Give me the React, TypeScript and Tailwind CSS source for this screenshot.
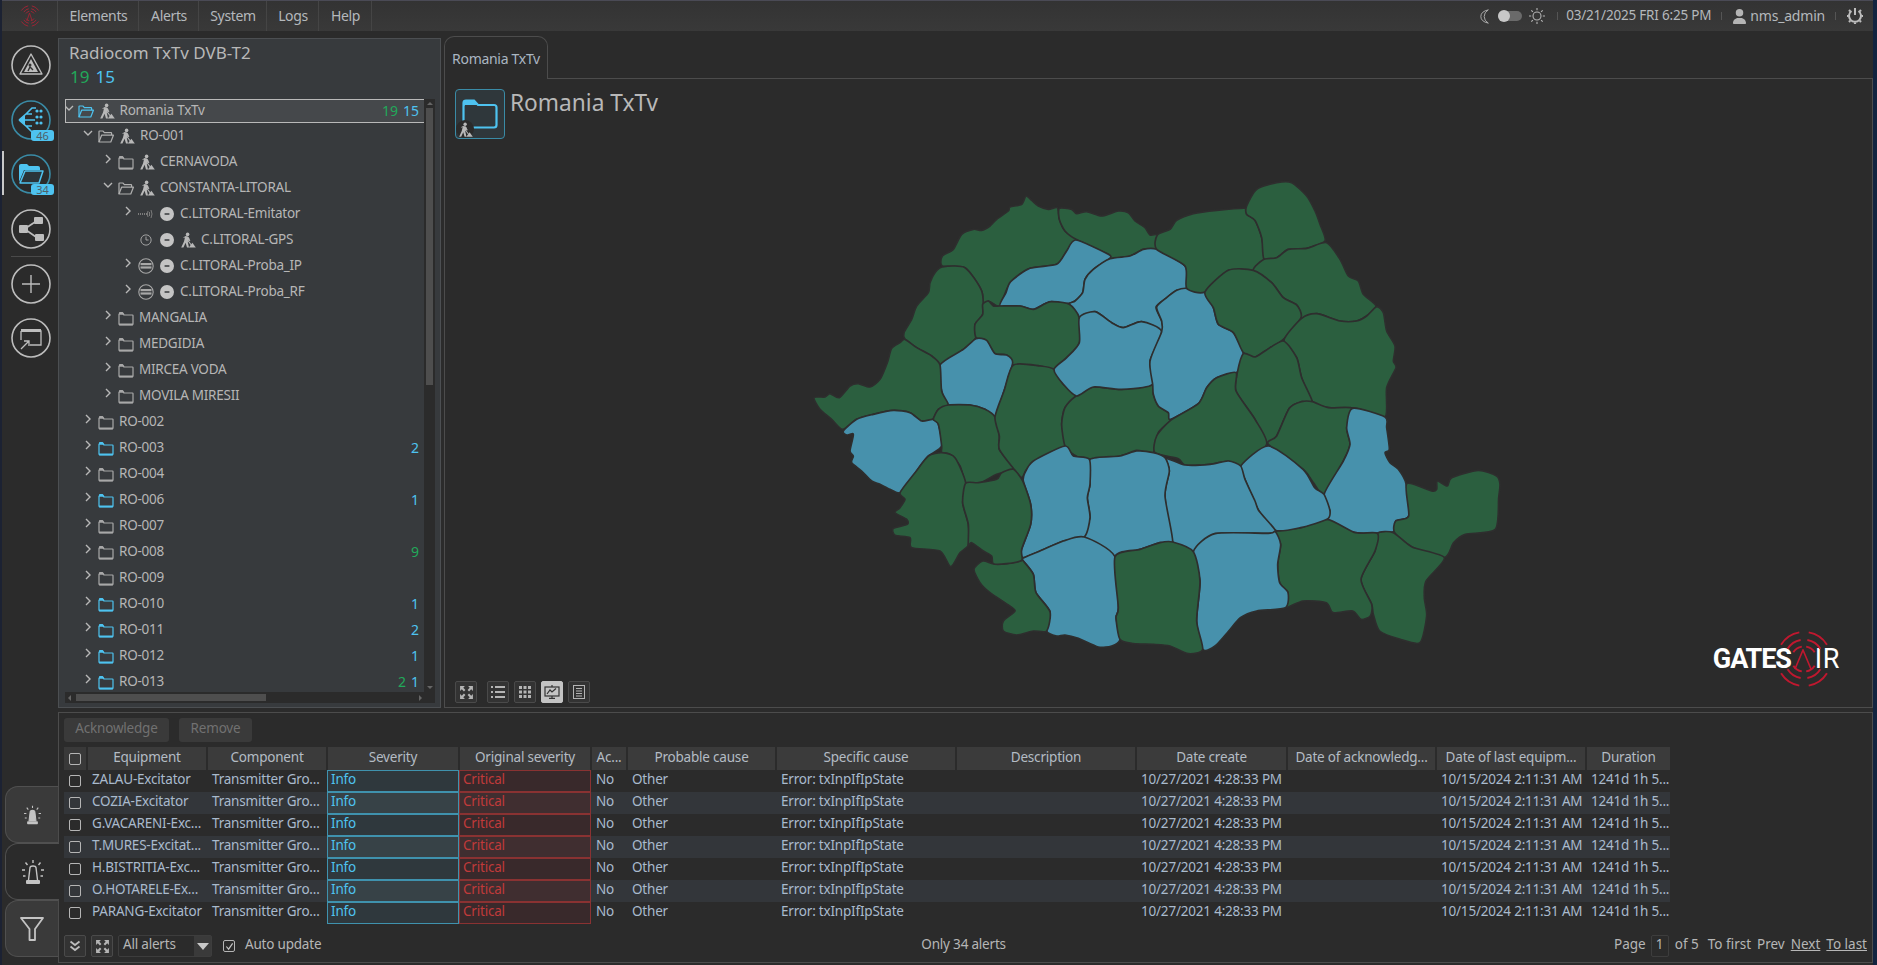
import React from "react";
import { FaCircleMinus, FaUser } from "react-icons/fa6";

const COUNTIES: [string, boolean][] = [
  ["427,315 427,285 460,265 485,220 520,205 545,208 570,195 590,175 625,150 630,138 665,130 678,105 695,118 715,135 745,145 772,140 778,175 795,210 828,235 800,270 770,310 690,322 640,355 620,385 600,435 580,428 565,420 548,430 545,390 495,320", false],
  ["778,142 815,145 830,158 860,152 905,165 955,150 985,155 1005,180 1035,200 1050,222 1075,222 1070,265 1030,265 990,285 930,293 925,280 828,235 795,210 778,175", false],
  ["828,237 925,280 928,293 880,325 855,355 848,395 825,420 800,428 755,422 735,428 700,445 660,435 600,435 618,395 632,362 690,322 770,310 800,270", true],
  ["930,293 990,285 1030,265 1070,265 1155,315 1160,380 1130,388 1100,410 1068,438 1085,480 1085,510 1025,482 970,500 935,485 885,452 838,470 808,430 825,420 848,395 855,355 880,325", true],
  ["427,318 495,320 545,390 548,460 525,490 528,530 490,565 420,612 395,585 350,560 315,535 312,515 335,475 350,435 385,395 390,365 405,335", false],
  ["548,430 565,420 580,435 600,435 660,435 700,445 735,428 755,422 808,430 838,470 838,545 800,590 762,625 720,615 640,612 620,582 585,578 560,540 528,530 525,490 548,460", false],
  ["528,533 560,538 585,578 620,582 638,605 612,690 585,765 555,745 510,732 445,732 425,690 420,612 490,565", true],
  ["42,710 75,708 90,698 118,710 150,675 175,668 210,678 240,655 262,605 275,562 300,545 315,535 350,560 395,585 420,612 425,690 445,732 415,745 398,775 365,780 330,755 280,748 220,760 170,775 128,805 95,775 60,745", false],
  ["130,810 170,775 220,760 280,748 330,755 365,780 398,775 415,790 425,855 385,885 350,930 305,995 270,985 240,970 215,960 185,930 155,905 160,885 150,870 160,820 140,822", true],
  ["400,775 415,745 445,732 510,732 555,745 585,768 598,825 598,865 640,922 590,940 535,968 497,965 480,915 450,880 425,876 425,855 415,790", false],
  ["640,612 720,615 762,625 790,670 828,705 795,740 785,790 795,855 720,895 680,925 665,950 640,922 598,865 598,825 585,768 612,690", false],
  ["828,705 880,678 965,685 1055,670 1060,700 1075,735 1105,755 1112,778 1075,815 1060,875 1010,868 960,885 860,895 820,880 795,855 785,790 795,740", false],
  ["838,470 885,452 935,485 970,500 1025,482 1085,512 1050,600 1058,670 965,685 880,678 830,705 790,670 762,625 800,590 838,545", true],
  ["1070,438 1100,410 1130,388 1160,382 1215,395 1240,440 1255,490 1300,515 1330,575 1310,635 1250,650 1220,680 1195,728 1112,775 1105,755 1075,735 1060,700 1058,670 1050,600 1085,512 1085,480", true],
  ["1072,222 1110,205 1130,178 1180,158 1250,148 1338,142 1340,160 1365,178 1385,230 1392,295 1360,328 1285,328 1215,393 1160,382 1155,315 1070,265", false],
  ["1340,135 1370,85 1430,65 1475,65 1520,105 1545,150 1560,190 1575,240 1520,262 1465,265 1430,290 1392,295 1385,230 1365,178 1340,160", false],
  ["1580,245 1620,295 1645,345 1675,360 1690,400 1728,435 1700,465 1670,480 1620,480 1550,458 1505,472 1500,450 1490,432 1450,410 1415,365 1360,328 1392,295 1430,290 1465,265 1520,262", false],
  ["1215,393 1285,328 1360,328 1415,365 1450,410 1490,432 1503,470 1450,535 1395,570 1365,588 1330,575 1300,515 1255,490 1240,440", false],
  ["1730,437 1750,455 1760,510 1785,555 1780,600 1788,620 1760,680 1755,768 1670,742 1585,740 1537,722 1505,650 1490,590 1452,538 1505,472 1550,458 1620,480 1670,480 1700,465", false],
  ["1450,540 1490,590 1505,650 1537,722 1505,722 1468,742 1430,825 1400,848 1365,775 1308,690 1312,635 1330,578 1365,588 1395,570", false],
  ["1308,635 1308,690 1365,775 1400,850 1325,915 1285,900 1230,910 1155,912 1135,893 1065,875 1070,825 1112,778 1195,728 1220,680 1250,650", false],
  ["1537,722 1585,740 1658,742 1640,800 1650,850 1630,900 1573,998 1540,965 1510,925 1405,850 1430,825 1468,742 1505,722", false],
  ["1658,742 1755,768 1760,800 1768,865 1755,875 1770,905 1795,925 1818,968 1826,1065 1787,1080 1784,1112 1666,1115 1581,1075 1590,1050 1573,998 1630,900 1650,850 1640,800", true],
  ["1820,968 1895,990 1910,985 1912,960 1942,975 1955,950 2035,928 2090,945 2100,970 2096,1010 2086,1105 1996,1120 1961,1145 1933,1190 1836,1158 1784,1115 1787,1080 1826,1065", false],
  ["1780,1115 1836,1158 1933,1190 1878,1260 1873,1310 1880,1365 1860,1445 1801,1435 1739,1410 1720,1360 1715,1330 1683,1255 1725,1170 1732,1117", false],
  ["1426,1112 1502,1100 1581,1075 1666,1115 1732,1117 1725,1170 1683,1255 1715,1330 1711,1365 1683,1375 1658,1350 1599,1355 1579,1325 1509,1320 1456,1340 1464,1295 1439,1265 1433,1210 1442,1150", false],
  ["1405,855 1509,925 1544,980 1572,1000 1590,1050 1581,1075 1502,1100 1426,1108 1377,1050 1335,955 1322,915", true],
  ["1100,893 1155,912 1230,910 1285,900 1322,915 1335,955 1365,1020 1377,1050 1426,1108 1405,1117 1245,1118 1180,1172 1118,1143 1095,1005 1108,930", true],
  ["1245,1118 1405,1117 1426,1112 1442,1150 1433,1210 1439,1265 1464,1295 1456,1340 1370,1350 1321,1370 1286,1410 1245,1455 1208,1465 1190,1380 1200,1260 1180,1172", true],
  ["870,895 960,885 1010,870 1060,875 1095,890 1108,930 1095,1005 1118,1143 1080,1145 1020,1165 945,1187 853,1128 870,1070 862,1010 870,970", true],
  ["795,855 820,885 868,895 870,970 862,1010 870,1070 853,1128 790,1140 720,1170 668,1190 665,1165 692,1090 692,1030 670,960 675,935 700,900", true],
  ["668,1192 720,1170 790,1140 853,1128 945,1187 955,1340 948,1370 960,1435 935,1455 895,1458 835,1432 795,1422 770,1425 740,1410 750,1352 708,1295 700,1240 670,1200", true],
  ["945,1187 1020,1165 1080,1145 1118,1143 1180,1172 1200,1260 1190,1380 1208,1465 1165,1478 1110,1455 1060,1450 1000,1448 960,1435 948,1370 955,1340", false],
  ["522,1225 548,1200 580,1208 620,1208 665,1198 670,1200 700,1240 708,1295 750,1352 740,1410 700,1410 650,1422 610,1410 610,1380 645,1350 625,1332 570,1295 540,1265", false],
  ["300,995 345,935 385,885 425,875 465,890 497,965 488,1025 505,1090 505,1152 480,1175 452,1217 420,1170 335,1160 330,1130 285,1123 280,1102 322,1090 320,1075 285,1055 300,1040 315,1015", false],
  ["497,967 535,965 590,955 605,935 640,925 668,960 692,1030 692,1090 665,1165 665,1198 620,1208 580,1208 575,1185 550,1170 515,1145 505,1152 505,1090 488,1025", false],
];

function smooth(points: string): string {
  const p = points.split(" ").map((s) => s.split(",").map(Number));
  const n = p.length;
  const k = 0.12;
  let d = `M${p[0][0]},${p[0][1]}`;
  for (let i = 0; i < n; i++) {
    const a = p[(i - 1 + n) % n];
    const b = p[i];
    const c = p[(i + 1) % n];
    const e = p[(i + 2) % n];
    d += ` C${b[0] + (c[0] - a[0]) * k},${b[1] + (c[1] - a[1]) * k} ${c[0] - (e[0] - b[0]) * k},${c[1] - (e[1] - b[1]) * k} ${c[0]},${c[1]}`;
  }
  return d + "Z";
}

function RomaniaMap() {
  return (
    <svg viewBox="0 0 2115 1500" className="w-[705px] h-[500px] block">
      {COUNTIES.map(([pts, blue], i) => (
        <path key={i} d={smooth(pts)} fill={blue ? "#4791ac" : "#2b5f3f"} stroke="#2e2e2e" strokeWidth={5} strokeLinejoin="round" />
      ))}
    </svg>
  );
}

function Folder({ open, color, className }: { open?: boolean; color: string; className?: string }) {
  return (
    <svg viewBox="0 0 16 15" className={className ?? "w-4 h-[15px] shrink-0"} fill="none" stroke={color} strokeWidth={1.2}>
      {open ? (
        <>
          <path d="M1 13 V2.6 Q1 2 1.6 2 H5 L6.4 3.6 H13 Q13.6 3.6 13.6 4.2 V6" />
          <path d="M1 13 L3.6 6.2 H15.4 L12.8 13 Z" strokeLinejoin="round" />
        </>
      ) : (
        <>
          <path d="M1 3 H5 L6 4 H14.4 Q15 4 15 4.6 V13 Q15 13.8 14.2 13.8 H1.8 Q1 13.8 1 13 Z" strokeLinejoin="round" />
          <path d="M1 3.6 V1.8 Q1 1 1.8 1 H4.8 L6.6 3.4 H1 Z" fill={color} stroke="none" />
          <path d="M1 13.4 H15" strokeWidth={1.8} />
        </>
      )}
    </svg>
  );
}

function Chevron({ open }: { open?: boolean }) {
  return (
    <svg viewBox="0 0 10 10" className="w-[10px] h-[10px] shrink-0 -mt-[6px] -ml-[2px]" fill="none" stroke="#b8b8b8" strokeWidth={1.4}>
      {open ? <path d="M1 3 L5 7 L9 3" /> : <path d="M3 1 L7 5 L3 9" />}
    </svg>
  );
}

function Worker({ className = "w-4 h-4" }: { className?: string }) {
  return (
    <svg viewBox="0 0 16 16" className={className + " shrink-0"} fill="#b8b8b8">
      <circle cx="7.6" cy="2.4" r="1.8" />
      <path d="M5.2 4.6 L8 4.4 L9.4 6.4 L7.8 10 L9 15.6 L7 15.6 L5.6 10.8 L3.4 15.6 L1.2 15.6 L4 9.6 Z" />
      <path d="M8.4 5.2 L10.4 8.4 L9.4 9.2 L7.4 6.2 Z" />
      <path d="M6.4 5.6 L11.8 13 L11 13.6 L5.6 6.2 Z" />
      <path d="M8.8 15.6 L12.4 10.8 L15.8 15.6 Z" />
      <path d="M3.4 5.2 L7 3.6 L7.2 4.2 L3.8 6 Z" />
    </svg>
  );
}

function ProbaIcon() {
  return (
    <svg viewBox="0 0 16 16" className="w-4 h-4 shrink-0" fill="none" stroke="#a8a8a8">
      <circle cx="8" cy="8" r="7.2" strokeWidth={1.1} />
      <rect x="2.5" y="5" width="11" height="2.2" fill="#a8a8a8" stroke="none" />
      <rect x="2.5" y="8.4" width="11" height="2.2" fill="#a8a8a8" stroke="none" />
    </svg>
  );
}

function EmitterIcon() {
  return (
    <svg viewBox="0 0 16 10" className="w-4 h-[10px] shrink-0" fill="none" stroke="#7c7c7c" strokeWidth={1}>
      <path d="M0 5 H9" strokeDasharray="1 1" strokeWidth={2} />
      <path d="M10 2 Q8.6 5 10 8 M13 1 Q15 5 13 9 M11.5 3 V7" />
    </svg>
  );
}

function ClockIcon() {
  return (
    <svg viewBox="0 0 14 14" className="w-3 h-3 shrink-0" fill="none" stroke="#a8a8a8" strokeWidth={1.1}>
      <circle cx="7" cy="7" r="6" />
      <path d="M7 3 V7 H10" />
    </svg>
  );
}

type Row = {
  l: number;
  name: string;
  chev?: "o" | "c";
  icon: "fo" | "fc" | "fb" | "fbo" | "em" | "cl" | "pr";
  minus?: boolean;
  worker?: boolean;
  g?: string;
  b?: string;
};

const ROWS: Row[] = [
  { l: 0, name: "Romania TxTv", chev: "o", icon: "fbo", worker: true, g: "19", b: "15" },
  { l: 1, name: "RO-001", chev: "o", icon: "fo", worker: true },
  { l: 2, name: "CERNAVODA", chev: "c", icon: "fc", worker: true },
  { l: 2, name: "CONSTANTA-LITORAL", chev: "o", icon: "fo", worker: true },
  { l: 3, name: "C.LITORAL-Emitator", chev: "c", icon: "em", minus: true },
  { l: 3, name: "C.LITORAL-GPS", icon: "cl", minus: true, worker: true },
  { l: 3, name: "C.LITORAL-Proba_IP", chev: "c", icon: "pr", minus: true },
  { l: 3, name: "C.LITORAL-Proba_RF", chev: "c", icon: "pr", minus: true },
  { l: 2, name: "MANGALIA", chev: "c", icon: "fc" },
  { l: 2, name: "MEDGIDIA", chev: "c", icon: "fc" },
  { l: 2, name: "MIRCEA VODA", chev: "c", icon: "fc" },
  { l: 2, name: "MOVILA MIRESII", chev: "c", icon: "fc" },
  { l: 1, name: "RO-002", chev: "c", icon: "fc" },
  { l: 1, name: "RO-003", chev: "c", icon: "fb", b: "2" },
  { l: 1, name: "RO-004", chev: "c", icon: "fc" },
  { l: 1, name: "RO-006", chev: "c", icon: "fb", b: "1" },
  { l: 1, name: "RO-007", chev: "c", icon: "fc" },
  { l: 1, name: "RO-008", chev: "c", icon: "fc", g: "9" },
  { l: 1, name: "RO-009", chev: "c", icon: "fc" },
  { l: 1, name: "RO-010", chev: "c", icon: "fb", b: "1" },
  { l: 1, name: "RO-011", chev: "c", icon: "fb", b: "2" },
  { l: 1, name: "RO-012", chev: "c", icon: "fb", b: "1" },
  { l: 1, name: "RO-013", chev: "c", icon: "fb", g: "2", b: "1" },
];

const INDENT = ["pl-[0px]", "pl-[20px]", "pl-[40px]", "pl-[60px]"];

function TreeRow({ r, i }: { r: Row; i: number }) {
  const selected = i === 0;
  return (
    <div
      className={
        "flex items-center shrink-0 text-[13.5px] tracking-[-0.25px] pr-[5px] " +
        (selected ? "h-[24px] border-[1.5px] border-r-0 border-[#b9b9b9] bg-[#45484b] " : "h-[26px] ") +
        INDENT[r.l]
      }
    >
      <span className={"shrink-0 flex justify-start " + (selected ? "w-[11.5px]" : "w-[13px]")}>{r.chev && <Chevron open={r.chev === "o"} />}</span>
      <span className="flex items-center">
        {r.icon === "fo" && <Folder open color="#b0b0b0" />}
        {r.icon === "fc" && <Folder color="#a8a8a8" />}
        {r.icon === "fb" && <Folder color="#4ec3f0" />}
        {r.icon === "fbo" && <Folder open color="#4ec3f0" />}
        {r.icon === "em" && <EmitterIcon />}
        {r.icon === "cl" && (
          <span className="w-4 flex justify-center">
            <ClockIcon />
          </span>
        )}
        {r.icon === "pr" && <ProbaIcon />}
      </span>
      {r.minus && (
        <span className="ml-[6px] flex">
          <FaCircleMinus size={14} color="#c4c4c4" />
        </span>
      )}
      {r.worker && (
        <span className={"flex " + (r.minus ? "ml-[6px]" : "ml-[5px]")}>
          <Worker />
        </span>
      )}
      <span className={"whitespace-nowrap text-[#b6b6b6] pb-[1px] " + (r.worker ? "ml-[5px]" : r.minus ? "ml-[6px]" : "ml-[5px]")}>{r.name}</span>
      <span className="ml-auto flex gap-[5px] text-[14px] tracking-normal pb-[1px]">
        {r.g && <span className="text-[#22a85a]">{r.g}</span>}
        {r.b && <span className="text-[#4ec3f0]">{r.b}</span>}
      </span>
    </div>
  );
}

function Rings({ r = 1, color = "#c0182f" }: { r?: number; color?: string }) {
  const arc = (rad: number, a1: number, a2: number) => {
    const t = (a: number) => (a * Math.PI) / 180;
    return `M${rad * Math.cos(t(a1))},${rad * Math.sin(t(a1))} A${rad},${rad} 0 0 1 ${rad * Math.cos(t(a2))},${rad * Math.sin(t(a2))}`;
  };
  const quads: [number, number][] = [
    [-80, -32],
    [-148, -100],
    [32, 80],
    [100, 148],
  ];
  return (
    <svg viewBox="-30 -30 60 60" className="w-full h-full" fill="none" stroke={color} strokeWidth={2 * r}>
      {[13, 20, 28].map((rad) => quads.map(([a, b], i) => <path key={`${rad}${i}`} d={arc(rad, a, b)} />))}
    </svg>
  );
}

function Circle({ children, teal, badge }: { children: React.ReactNode; teal?: boolean; badge?: string }) {
  return (
    <div className="relative w-[40px] h-[40px]">
      <svg viewBox="0 0 40 40" className="w-[40px] h-[40px]" fill="none">
        <circle cx="20" cy="20" r="19" stroke={teal ? "#3a8ba6" : "#bdbdbd"} strokeWidth={1.6} />
        {children}
      </svg>
      {badge && (
        <span className="absolute right-[-3px] bottom-[-1px] w-[23px] h-[11px] rounded-[3px] bg-[#4ec3f0] text-[#4f5f68] text-[11px] leading-[11px] text-center">
          {badge}
        </span>
      )}
    </div>
  );
}

function Siren({ big }: { big?: boolean }) {
  return (
    <svg viewBox="0 0 24 26" className={big ? "w-[24px] h-[26px]" : "w-[19px] h-[20px]"} fill="none" stroke="#c4c4c4" strokeWidth={1.4}>
      <path d="M7.5 21 L9 8.5 Q9.3 7 12 7 Q14.7 7 15 8.5 L16.5 21" fill={big ? "none" : "#c4c4c4"} />
      <rect x="5" y="21" width="14" height="4" rx="1" fill="#c4c4c4" stroke="none" />
      <path d="M12 1 V4 M4.5 3.5 L6.5 6 M19.5 3.5 L17.5 6 M1 11 H4 M20 11 H23 M2 17 H4.5 M19.5 17 H22" />
    </svg>
  );
}

const W = {
  check: "w-[22px]",
  eq: "w-[118px]",
  comp: "w-[118px]",
  sev: "w-[130px]",
  ac: "w-[34px]",
  prob: "w-[147px]",
  spec: "w-[178px]",
  desc: "w-[178px]",
  dc: "w-[149px]",
  da: "w-[147px]",
  dl: "w-[148px]",
  dur: "w-[83px]",
};

function Box({ checked }: { checked?: boolean }) {
  return (
    <span className="w-[12px] h-[12px] border border-[#b5b5b5] rounded-[2px] flex items-center justify-center shrink-0">
      {checked && (
        <svg viewBox="0 0 10 10" className="w-[9px] h-[9px]" fill="none" stroke="#c4c4c4" strokeWidth={1.3}>
          <path d="M1.5 5 L4 8 L8.5 1.5" />
        </svg>
      )}
    </span>
  );
}

const HEAD: [string, string][] = [
  [W.eq, "Equipment"],
  [W.comp, "Component"],
  [W.sev, "Severity"],
  [W.sev, "Original severity"],
  [W.ac, "Ac..."],
  [W.prob, "Probable cause"],
  [W.spec, "Specific cause"],
  [W.desc, "Description"],
  [W.dc, "Date create"],
  [W.da, "Date of acknowledg..."],
  [W.dl, "Date of last equipm..."],
  [W.dur, "Duration"],
];

const EQUIP = ["ZALAU-Excitator", "COZIA-Excitator", "G.VACARENI-Exc...", "T.MURES-Excitat...", "H.BISTRITIA-Exc...", "O.HOTARELE-Ex...", "PARANG-Excitator"];

function Cell({ w, children }: { w: string; children?: React.ReactNode }) {
  return <div className={w + " px-[4px] shrink-0 whitespace-nowrap overflow-hidden text-[#a9bacd] pb-[3px]"}>{children}</div>;
}

function ToolBtn({ active, children }: { active?: boolean; children: React.ReactNode }) {
  return (
    <div className={"w-[22px] h-[22px] rounded-[2px] border flex items-center justify-center " + (active ? "bg-[#c4c4c4] border-[#c4c4c4]" : "bg-[#333333] border-[#4a4a4a]")}>
      {children}
    </div>
  );
}

function ExpandIcon({ color = "#b4b4b4" }: { color?: string }) {
  return (
    <svg viewBox="0 0 14 14" className="w-[15px] h-[15px]" fill={color}>
      <path d="M1 1 H5.5 L4 2.6 L6 4.6 L4.6 6 L2.6 4 L1 5.5 Z" />
      <path d="M13 1 V5.5 L11.4 4 L9.4 6 L8 4.6 L10 2.6 L8.5 1 Z" />
      <path d="M1 13 V8.5 L2.6 10 L4.6 8 L6 9.4 L4 11.4 L5.5 13 Z" />
      <path d="M13 13 H8.5 L10 11.4 L8 9.4 L9.4 8 L11.4 10 L13 8.5 Z" />
    </svg>
  );
}

const MENU: [string, string][] = [
  ["Elements", "w-[81px]"],
  ["Alerts", "w-[60px]"],
  ["System", "w-[68px]"],
  ["Logs", "w-[52px]"],
  ["Help", "w-[53px]"],
];

export default function App() {
  return (
    <div className="w-screen h-screen overflow-hidden flex flex-col bg-[#2b2b2b] border-l-2 border-r-[4px] border-l-[#1c2233] border-r-[#12233f] text-[#b6b6b6] [font-family:'Noto_Sans',sans-serif] text-[14px]">
      {/* top bar */}
      <header className="h-[31px] shrink-0 flex items-center border-t border-t-[#4a4a55] bg-gradient-to-b from-[#333333] to-[#393939] pr-[9px]">
        <div className="w-[56px] h-full flex items-center justify-center border-r border-[#454545] relative">
          <div className="w-[22px] h-[22px]">
            <Rings r={1.3} color="#a02535" />
          </div>
          <svg viewBox="0 0 8 10" className="absolute w-[7px] h-[9px]" fill="none" stroke="#a02535" strokeWidth={1}>
            <path d="M1 10 L4 1 L7 10" />
          </svg>
        </div>
        {MENU.map(([m, w]) => (
          <div key={m} className={w + " h-full pb-[2px] pl-[1px] flex items-center justify-center border-r border-[#454545] text-[#b4b8bc] tracking-[-0.35px]"}>
            {m}
          </div>
        ))}
        <div className="ml-auto flex items-center">
          <svg viewBox="0 0 14 18" className="w-[12px] h-[15px]" fill="none" stroke="#b4b4b4" strokeWidth={1.1}>
            <path d="M11 1 Q2 3 2 9 Q2 15 11 17 Q6 14 6 9 Q6 4 11 1 Z" />
          </svg>
          <div className="ml-[7px] w-[24px] h-[10px] rounded-full bg-[#6a6a6a] relative">
            <div className="absolute left-0 top-[-1px] w-[12px] h-[12px] rounded-full bg-[#c8c8c8]" />
          </div>
          <svg viewBox="0 0 18 18" className="ml-[6px] w-[18px] h-[18px]" fill="none" stroke="#b4b4b4" strokeWidth={1.1}>
            <circle cx="9" cy="9" r="4" />
            <path d="M9 1 V3.2 M9 14.8 V17 M1 9 H3.2 M14.8 9 H17 M3.3 3.3 L4.9 4.9 M13.1 13.1 L14.7 14.7 M3.3 14.7 L4.9 13.1 M13.1 4.9 L14.7 3.3" />
          </svg>
          <span className="ml-[11px] mr-[8px] w-px h-[8px] bg-[#555555]" />
          <span className="text-[#b4b8bc] text-[13.5px] tracking-[-0.2px] whitespace-nowrap pb-[2px]">03/21/2025 FRI 6:25 PM</span>
          <span className="mx-[10px] w-px h-[8px] bg-[#555555]" />
          <FaUser size={15} color="#b4b4b4" />
          <span className="ml-[3px] text-[#b4b8bc] tracking-[-0.2px] pb-[2px]">nms_admin</span>
          <span className="mx-[10px] w-px h-[8px] bg-[#555555]" />
          <svg viewBox="0 0 18 18" className="w-[18px] h-[18px]" fill="none" stroke="#bdbdbd" strokeWidth={2}>
            <path d="M9 1 V8" />
            <path d="M5.5 4 A6 6 0 1 0 12.5 4" />
            <path d="M3 3 L4.2 4.2 M15 3 L13.8 4.2 M1 9 H2.6 M15.4 9 H17 M3 15 L4.2 13.8 M15 15 L13.8 13.8 M9 15.6 V17" strokeWidth={2.2} />
          </svg>
        </div>
      </header>

      <div className="flex-1 flex min-h-0">
        {/* left rail */}
        <aside className="w-[56px] shrink-0 flex flex-col relative">
          <div className="flex flex-col items-center pl-[2px] pt-[14px]">
            <Circle>
              <path d="M20 9 L31 29 H9 Z" stroke="#bdbdbd" strokeWidth={1.4} strokeLinejoin="round" />
              <path d="M20 14 L27 27 H13 Z" fill="#bdbdbd" />
              <circle cx="19" cy="20" r="1.5" fill="#333" />
              <path d="M17 26 L19 22 L22 25" stroke="#333" strokeWidth={1.4} />
            </Circle>
            <div className="h-[15px]" />
            <Circle teal badge="46">
              <path d="M8 20 L15 14 H21 M8 20 L15 26 H21 M8 20 H24 M15 14 L21 8 H25 M15 26 L21 32" stroke="#4ec3f0" strokeWidth={1.6} fill="none" />
              <path d="M8 20 L14 15 V25 Z" fill="#4ec3f0" />
              <circle cx="26" cy="11" r="1.6" fill="#4ec3f0" />
              <circle cx="30" cy="11" r="1.6" fill="#4ec3f0" />
              <circle cx="26" cy="17" r="1.6" fill="#4ec3f0" />
              <circle cx="30" cy="17" r="1.6" fill="#4ec3f0" />
              <circle cx="26" cy="23" r="1.6" fill="#4ec3f0" />
              <circle cx="30" cy="23" r="1.6" fill="#4ec3f0" />
            </Circle>
            <div className="h-[14px]" />
            <Circle teal badge="34">
              <path d="M8 28 V12 Q8 10 10 10 H16 L18 12 H27 Q29 12 29 14 V16 H13 L8 28 Z" fill="#4ec3f0" />
              <path d="M9 29 L14 17 H32 L28 29 Z" stroke="#4ec3f0" strokeWidth={1.5} fill="#2b3438" strokeLinejoin="round" />
            </Circle>
            <div className="h-[15px]" />
            <Circle>
              <rect x="8" y="16" width="9" height="8" rx="1" fill="#bdbdbd" />
              <rect x="23" y="8" width="9" height="7" rx="1" fill="#bdbdbd" />
              <rect x="24" y="25" width="9" height="7" rx="1" fill="#bdbdbd" />
              <path d="M15 19 L24 13 M15 21 L25 28" stroke="#bdbdbd" strokeWidth={1.6} />
            </Circle>
            <div className="w-[40px] h-px bg-[#4a4a4a] mt-[7px] mb-[7px]" />
            <Circle>
              <path d="M20 11 V29 M11 20 H29" stroke="#bdbdbd" strokeWidth={1.4} />
            </Circle>
            <div className="h-[14px]" />
            <Circle>
              <path d="M10 13 H30 V27 H19 M10 13 V22" stroke="#bdbdbd" strokeWidth={1.3} />
              <rect x="10" y="11" width="20" height="3" fill="#bdbdbd" />
              <path d="M10 31 L18 23 M13 23 H18 V28" stroke="#bdbdbd" strokeWidth={1.3} />
            </Circle>
          </div>
          <div className="absolute left-[0px] top-[120px] w-[2px] h-[44px] bg-[#c8c8c8]" />
          {/* bottom tabs */}
          <div className="mt-auto mb-[8px] flex flex-col pl-[3px]">
            <div className="h-[57px] rounded-l-[13px] bg-[#3a3a3a] border border-r-0 border-[#505050] flex items-center justify-center">
              <Siren />
            </div>
            <div className="h-[57px] rounded-l-[13px] bg-[#2b2b2b] border-l border-t border-b border-[#505050] flex items-center justify-center relative z-10 -mr-px">
              <Siren big />
            </div>
            <div className="h-[57px] rounded-l-[13px] bg-[#3a3a3a] border border-r-0 border-[#505050] flex items-center justify-center">
              <svg viewBox="0 0 24 26" className="w-[24px] h-[26px]" fill="none" stroke="#c4c4c4" strokeWidth={1.8} strokeLinejoin="round">
                <path d="M1 2 H23 L15 13 V24 L9.5 24 V13 Z" />
              </svg>
            </div>
          </div>
        </aside>

        {/* main column */}
        <main className="flex-1 min-w-0 flex flex-col pt-[7px] pb-[2px]">
          <div className="h-[670px] shrink-0 flex gap-[3px]">
            {/* tree panel */}
            <section className="w-[383px] shrink-0 bg-[#373a3d] border border-[#4c4f52] flex flex-col pl-[6px] pr-[5px] pb-[4px]">
              <div className="text-[17px] leading-[26px] pl-[4px] pt-[1px] text-[#b8b8b8] whitespace-nowrap">Radiocom TxTv DVB-T2</div>
              <div className="text-[17px] leading-[22px] pl-[5px] flex gap-[6px]">
                <span className="text-[#22a85a]">19</span>
                <span className="text-[#4ec3f0]">15</span>
              </div>
              <div className="mt-[11px] flex-1 min-h-0 flex flex-col">
                <div className="flex-1 min-h-0 flex">
                  <div className="flex-1 min-w-0 overflow-hidden flex flex-col">
                    {ROWS.map((r, i) => (
                      <TreeRow key={r.name} r={r} i={i} />
                    ))}
                  </div>
                  <div className="w-[11px] shrink-0 bg-[#2b2b2b] flex flex-col items-center pt-[3px] pb-[3px]">
                    <span className="w-0 h-0 border-x-[3px] border-x-transparent border-b-[3px] border-b-[#666666]" />
                    <div className="w-[7px] h-[277px] mt-[3px] bg-[#4e4e4e]" />
                    <span className="mt-auto w-0 h-0 border-x-[3px] border-x-transparent border-t-[3px] border-t-[#666666]" />
                  </div>
                </div>
                <div className="h-[11px] shrink-0 bg-[#2b2b2b] flex items-center pl-[3px] pr-[13px]">
                  <span className="w-0 h-0 border-y-[3px] border-y-transparent border-r-[3px] border-r-[#666666]" />
                  <div className="ml-[5px] w-[190px] h-[7px] bg-[#4e4e4e]" />
                  <span className="ml-auto w-0 h-0 border-y-[3px] border-y-transparent border-l-[3px] border-l-[#666666]" />
                </div>
              </div>
            </section>

            {/* right panel */}
            <section className="flex-1 min-w-0 flex flex-col -mt-[2px]">
              <div className="h-[42px] shrink-0 flex">
                <div className="w-[104px] h-[43px] rounded-t-[10px] border border-b-0 border-[#4c4c4c] bg-[#2b2b2b] flex items-center justify-center text-[14px] text-[#aab6c2] tracking-[-0.3px] relative z-10 whitespace-nowrap">
                  Romania TxTv
                </div>
              </div>
              <div className="flex-1 min-h-0 border border-[#4c4c4c] relative flex flex-col">
                <div className="flex pl-[10px] pt-[10px] shrink-0">
                  <div className="relative w-[50px] h-[50px] rounded-[4px] border border-[#3a8ba6] bg-[#2f373b] flex items-center justify-center">
                    <svg viewBox="0 0 36 30" className="w-[36px] h-[30px]" fill="none">
                      <path d="M1.5 4 Q1.5 1.5 4 1.5 H12 L16 6 H32 Q34.5 6 34.5 8.5 V26 Q34.5 28.5 32 28.5 H4 Q1.5 28.5 1.5 26 Z" stroke="#4ec3f0" strokeWidth={2.2} />
                      <path d="M1.5 8 V4 Q1.5 1.5 4 1.5 H12 L16 6 H3 Z" fill="#4ec3f0" />
                    </svg>
                    <div className="absolute left-0 bottom-0 w-[18px] h-[18px] rounded-full bg-[#2b2b2b] flex items-center justify-center">
                      <Worker className="w-[15px] h-[15px]" />
                    </div>
                  </div>
                  <div className="ml-[5px] -mt-[4px] text-[22.7px] leading-[36px] text-[#b8b8b8] whitespace-nowrap">Romania TxTv</div>
                </div>
                <div className="ml-[355px] mt-[22px] shrink-0">
                  <RomaniaMap />
                </div>
                {/* bottom view buttons */}
                <div className="mt-auto mb-[4px] pl-[10px] flex gap-[5px] items-center">
                  <ToolBtn>
                    <ExpandIcon />
                  </ToolBtn>
                  <div className="w-0" />
                  <ToolBtn>
                    <svg viewBox="0 0 14 12" className="w-[14px] h-[12px]" fill="#b4b4b4">
                      <path d="M0 0 H2 V2 H0 Z M0 5 H2 V7 H0 Z M0 10 H2 V12 H0 Z M4 0 H14 V2 H4 Z M4 5 H14 V7 H4 Z M4 10 H14 V12 H4 Z" />
                    </svg>
                  </ToolBtn>
                  <ToolBtn>
                    <svg viewBox="0 0 12 12" className="w-[12px] h-[12px]" fill="#b4b4b4">
                      <path d="M0 0 H3 V3 H0 Z M4.5 0 H7.5 V3 H4.5 Z M9 0 H12 V3 H9 Z M0 4.5 H3 V7.5 H0 Z M4.5 4.5 H7.5 V7.5 H4.5 Z M9 4.5 H12 V7.5 H9 Z M0 9 H3 V12 H0 Z M4.5 9 H7.5 V12 H4.5 Z M9 9 H12 V12 H9 Z" />
                    </svg>
                  </ToolBtn>
                  <ToolBtn active>
                    <svg viewBox="0 0 16 14" className="w-[16px] h-[14px]" fill="none" stroke="#333" strokeWidth={1.2}>
                      <rect x="1" y="2" width="14" height="9" />
                      <path d="M3 9 L6 5 L8 7 L12 3.5 M8 11 V13 M5 13.4 H11 M8 0 V2" />
                    </svg>
                  </ToolBtn>
                  <ToolBtn>
                    <svg viewBox="0 0 12 14" className="w-[12px] h-[14px]" fill="none" stroke="#b4b4b4">
                      <rect x="0.5" y="0.5" width="11" height="13" />
                      <path d="M3 3.5 H9 M3 6 H9 M3 8.5 H9 M3 11 H9" strokeWidth={1.2} />
                    </svg>
                  </ToolBtn>
                </div>
                {/* logo */}
                <div className="absolute right-[32px] bottom-[19px] flex items-center h-[58px] text-white [font-family:'Roboto',sans-serif] font-bold text-[27px] leading-none">
                  <span className="tracking-[-1.1px]">GATES</span>
                  <div className="relative w-[22px] h-[20px] mx-[1px]">
                    <div className="absolute left-[-17px] top-[-19px] w-[58px] h-[58px]">
                      <Rings />
                    </div>
                    <svg viewBox="0 0 22 20" className="absolute inset-0 w-[22px] h-[20px]" fill="none" stroke="#c0182f" strokeWidth={1.6}>
                      <path d="M3 20 L11 1 L19 20" />
                    </svg>
                  </div>
                  <span className="font-normal tracking-[0.6px]">IR</span>
                </div>
              </div>
            </section>
          </div>

          {/* alerts panel */}
          <section className="mt-[4px] flex-1 min-h-0 border border-[#4c4c4c] pl-[5px] pt-[5px] flex flex-col text-[13.5px] tracking-[-0.2px]">
            <div className="flex gap-[10px] h-[24px] shrink-0">
              <div className="w-[105px] pb-[3px] rounded-[3px] bg-[#3a3a3a] text-[#717171] flex items-center justify-center">Acknowledge</div>
              <div className="w-[73px] pb-[3px] rounded-[3px] bg-[#3a3a3a] text-[#717171] flex items-center justify-center">Remove</div>
            </div>
            <div className="mt-[5px] flex gap-[2px] h-[23px] shrink-0">
              <div className={W.check + " bg-[#393939] flex items-center justify-center"}>
                <Box />
              </div>
              {HEAD.map(([w, t]) => (
                <div key={t} className={w + " pb-[3px] bg-[#3b3b3b] text-[#b4bcc4] flex items-center justify-center whitespace-nowrap overflow-hidden"}>
                  {t}
                </div>
              ))}
            </div>
            <div className="flex flex-col w-[1606px]">
              {EQUIP.map((e, i) => (
                <div key={e} className={"flex gap-[2px] h-[22px] items-center " + (i % 2 ? "bg-[#33363a]" : "bg-[#2b2b2b]")}>
                  <div className={W.check + " flex justify-center"}>
                    <Box />
                  </div>
                  <Cell w={W.eq}>{e}</Cell>
                  <Cell w={W.comp}>Transmitter Gro...</Cell>
                  <div className={"w-[132px] h-[22px] -mx-px shrink-0 border border-[#3f92ae] text-[#4ec3f0] px-[3px] leading-[17px] " + (i % 2 ? "bg-[#374247]" : "bg-[#2f383d]")}>Info</div>
                  <div className={"w-[132px] h-[22px] -mx-px shrink-0 border border-[#8a3232] text-[#c03a3a] px-[3px] leading-[17px] " + (i % 2 ? "bg-[#402e30]" : "bg-[#39292b]")}>Critical</div>
                  <Cell w={W.ac}>No</Cell>
                  <Cell w={W.prob}>Other</Cell>
                  <Cell w={W.spec}>Error: txInpIfIpState</Cell>
                  <Cell w={W.desc} />
                  <Cell w={W.dc}>10/27/2021 4:28:33 PM</Cell>
                  <Cell w={W.da} />
                  <Cell w={W.dl}>10/15/2024 2:11:31 AM</Cell>
                  <Cell w={W.dur}>1241d 1h 5...</Cell>
                </div>
              ))}
            </div>
            <div className="mt-auto mb-[5px] flex items-center h-[22px] shrink-0 pr-[5px]">
              <div className="w-[22px] h-[22px] bg-[#333333] border border-[#4a4a4a] rounded-[2px] flex items-center justify-center">
                <svg viewBox="0 0 12 12" className="w-[12px] h-[12px]" fill="none" stroke="#bdbdbd" strokeWidth={1.8}>
                  <path d="M1.5 1.5 L6 5 L10.5 1.5 M1.5 6.5 L6 10 L10.5 6.5" />
                </svg>
              </div>
              <div className="ml-[5px]">
                <ToolBtn>
                  <ExpandIcon />
                </ToolBtn>
              </div>
              <div className="ml-[5px] w-[94px] h-[22px] pb-[3px] border border-[#3d3d3d] rounded-[2px] flex items-center pl-[4px] text-[#b6b6b6] relative">
                All alerts
                <span className="absolute right-0 top-0 w-[17px] h-[20px] bg-[#3a3a3a] flex items-center justify-center">
                  <span className="w-0 h-0 border-x-[6px] border-x-transparent border-t-[7px] border-t-[#c8c8c8]" />
                </span>
              </div>
              <div className="ml-[11px]">
                <Box checked />
              </div>
              <span className="ml-[10px] text-[#b6b6b6] whitespace-nowrap pb-[3px]">Auto update</span>
              <span className="ml-[600px] text-[#b6b6b6] whitespace-nowrap pb-[3px]">Only 34 alerts</span>
              <div className="ml-auto flex items-center text-[#b6b6b6] whitespace-nowrap text-[13.5px] tracking-normal">
                <span className="pb-[3px]">Page</span>
                <span className="ml-[5px] w-[18px] h-[22px] border border-[#3d3d3d] rounded-[2px] flex items-center justify-center pb-[3px]">1</span>
                <span className="ml-[6px] pb-[3px]">of 5</span>
                <span className="ml-[9px] pb-[3px]">To first</span>
                <span className="ml-[6px] pb-[3px]">Prev</span>
                <span className="ml-[6px] underline pb-[3px]">Next</span>
                <span className="ml-[6px] underline pb-[3px]">To last</span>
              </div>
            </div>
          </section>
        </main>
      </div>
    </div>
  );
}
